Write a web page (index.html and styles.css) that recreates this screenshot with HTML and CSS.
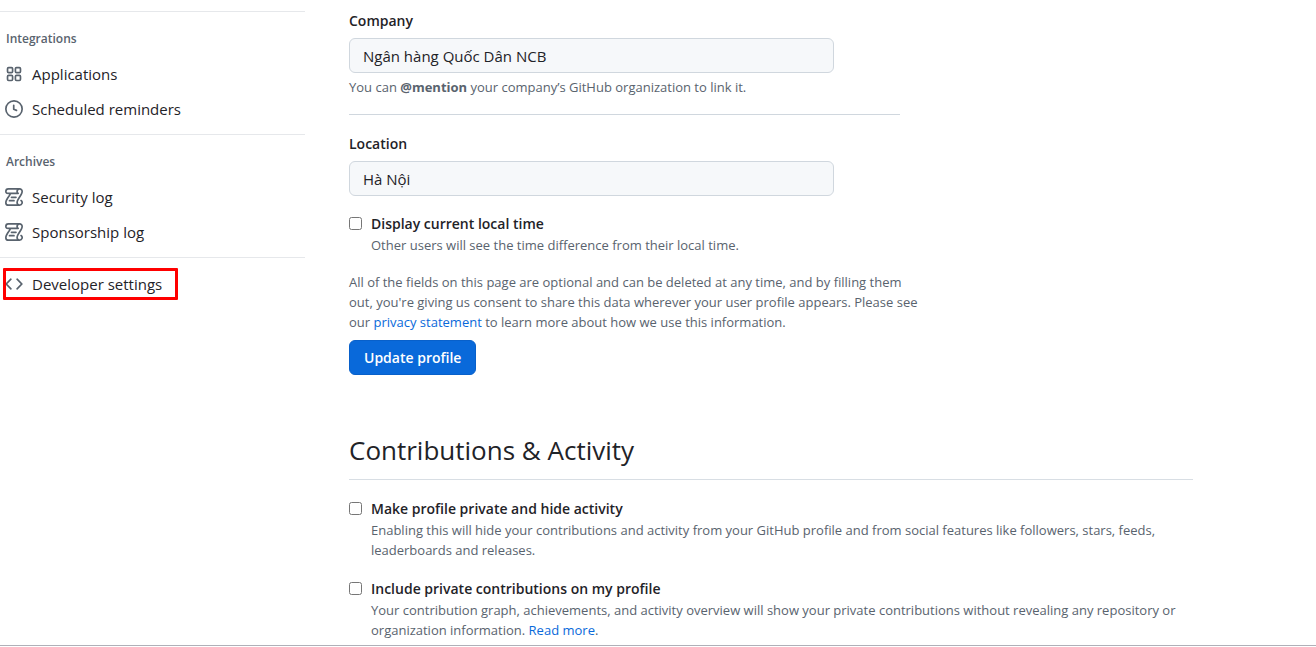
FILE: index.html
```html
<!DOCTYPE html>
<html lang="en">
<head>
<meta charset="utf-8">
<meta name="viewport" content="width=device-width, initial-scale=1">
<title>Your profile</title>
<link rel="stylesheet" href="styles.css">
</head>
<body>
<svg class="sprite" aria-hidden="true">
  <symbol id="apps" viewBox="0 0 16 16"><path fill="none" stroke="currentColor" stroke-width="1.5" d="M3.25 2.25h2.5a1 1 0 0 1 1 1v2.5a1 1 0 0 1-1 1h-2.5a1 1 0 0 1-1-1v-2.5a1 1 0 0 1 1-1ZM10.25 2.25h2.5a1 1 0 0 1 1 1v2.5a1 1 0 0 1-1 1h-2.5a1 1 0 0 1-1-1v-2.5a1 1 0 0 1 1-1ZM3.25 9.25h2.5a1 1 0 0 1 1 1v2.5a1 1 0 0 1-1 1h-2.5a1 1 0 0 1-1-1v-2.5a1 1 0 0 1 1-1ZM10.25 9.25h2.5a1 1 0 0 1 1 1v2.5a1 1 0 0 1-1 1h-2.5a1 1 0 0 1-1-1v-2.5a1 1 0 0 1 1-1Z"/></symbol>
  <symbol id="clock" viewBox="0 0 16 16"><path d="M8 0a8 8 0 1 1 0 16A8 8 0 0 1 8 0ZM1.500 8a6.500 6.500 0 1 0 13 0 6.500 6.500 0 0 0-13 0Zm7-3.250v2.992l2.028.812a.75.75 0 0 1-.557 1.392l-2.500-1A.751.751 0 0 1 7 8.250v-3.500a.75.75 0 0 1 1.500 0Z"/></symbol>
  <symbol id="log" viewBox="0 0 16 16"><path d="M5 8.250a.75.75 0 0 1 .75-.75h4a.75.75 0 0 1 0 1.500h-4A.75.75 0 0 1 5 8.250ZM4 10.500A.75.75 0 0 0 4 12h4a.75.75 0 0 0 0-1.500H4Z"/><path d="M13 0c1.654 0 3 1.328 3 3 0 .982-.338 1.933-.783 2.818-.443.879-1.028 1.758-1.582 2.588l-.011.017c-.568.853-1.104 1.659-1.501 2.446-.398.789-.623 1.494-.623 2.136a1.500 1.500 0 1 0 2.333-1.248.75.75 0 0 1 .834-1.246A3 3 0 0 1 13 16H3a3 3 0 0 1-3-3c0-1.582.891-3.135 1.777-4.506.209-.322.418-.637.623-.946.473-.709.923-1.386 1.287-2.048H2.510c-.576 0-1.381-.133-1.907-.783A2.680 2.680 0 0 1 0 3a3 3 0 0 1 3-3Zm0 1.500a1.500 1.500 0 0 0-1.500 1.500c0 .476.223.834.667 1.132A.75.75 0 0 1 11.750 5.500H5.368c-.467 1.003-1.141 2.015-1.773 2.963-.192.289-.381.571-.558.845C2.130 10.711 1.500 11.916 1.500 13A1.500 1.500 0 0 0 3 14.500h7.401A2.989 2.989 0 0 1 10 13c0-.979.338-1.928.784-2.812.441-.874 1.023-1.748 1.575-2.576l.017-.026c.568-.853 1.103-1.658 1.501-2.448.398-.79.623-1.497.623-2.143 0-.838-.669-1.500-1.500-1.500Zm-10 0a1.500 1.500 0 0 0-1.500 1.500c0 .321.1.569.27.778.097.12.325.227.74.227h7.674A2.737 2.737 0 0 1 10 3c0-.546.146-1.059.401-1.500Z"/></symbol>
  <symbol id="code" viewBox="0 0 16 16"><path d="m11.280 3.220 4.250 4.250a.75.75 0 0 1 0 1.060l-4.250 4.250a.749.749 0 0 1-1.275-.326.749.749 0 0 1 .215-.734L13.940 8l-3.720-3.720a.749.749 0 0 1 .326-1.275.749.749 0 0 1 .734.215Zm-6.560 0a.751.751 0 0 1 1.042.018.751.751 0 0 1 .018 1.042L2.060 8l3.720 3.720a.749.749 0 0 1-.326 1.275.749.749 0 0 1-.734-.215L.47 8.530a.75.75 0 0 1 0-1.060Z"/></symbol>
</svg>
<div class="page">
  <nav class="sidebar" aria-label="Settings">
    <section class="nav-group">
      <h2 class="nav-title">Integrations</h2>
      <a class="nav-item" href="#"><svg class="icon"><use href="#apps"/></svg>Applications</a>
      <a class="nav-item" href="#"><svg class="icon"><use href="#clock"/></svg>Scheduled reminders</a>
    </section>
    <section class="nav-group">
      <h2 class="nav-title">Archives</h2>
      <a class="nav-item" href="#"><svg class="icon"><use href="#log"/></svg>Security log</a>
      <a class="nav-item" href="#"><svg class="icon"><use href="#log"/></svg>Sponsorship log</a>
    </section>
    <section class="nav-group nav-group-last">
      <a class="nav-item marked" href="#"><svg class="icon"><use href="#code"/></svg>Developer settings</a>
    </section>
  </nav>
  <main class="main">
    <form class="profile-form">
      <div class="field">
        <label class="label" for="company">Company</label>
        <input class="input" id="company" type="text" value="Ngân hàng Quốc Dân NCB">
        <p class="note">You can <strong>@mention</strong> your company’s GitHub organization to link it.</p>
      </div>
      <hr class="rule">
      <div class="field">
        <label class="label" for="location">Location</label>
        <input class="input" id="location" type="text" value="Hà Nội">
      </div>
      <div class="check">
        <input class="box" id="localtime" type="checkbox">
        <div>
          <label class="label" for="localtime">Display current local time</label>
          <p class="note">Other users will see the time difference from their local time.</p>
        </div>
      </div>
      <p class="note consent">All of the fields on this page are optional and can be deleted at any time, and by filling them out, you're giving us consent to share this data wherever your user profile appears. Please see our <a class="link" href="#">privacy statement</a> to learn more about how we use this information.</p>
      <button class="button" type="button">Update profile</button>
    </form>
    <section class="activity">
      <h2 class="heading">Contributions &amp; Activity</h2>
      <div class="check">
        <input class="box" id="private" type="checkbox">
        <div>
          <label class="label" for="private">Make profile private and hide activity</label>
          <p class="note">Enabling this will hide your contributions and activity from your GitHub profile and from social features like followers, stars, feeds, leaderboards and releases.</p>
        </div>
      </div>
      <div class="check">
        <input class="box" id="include" type="checkbox">
        <div>
          <label class="label" for="include">Include private contributions on my profile</label>
          <p class="note">Your contribution graph, achievements, and activity overview will show your private contributions without revealing any repository or organization information. <a class="link" href="#">Read more</a>.</p>
        </div>
      </div>
    </section>
  </main>
</div>
</body>
</html>
```
FILE: styles.css
```css
* {
  box-sizing: border-box;
}

body {
  margin: 0;
  background: #fff;
  color: #1f2328;
  font: 15px/22px "Open Sans", "Noto Sans", sans-serif;
}

.sprite {
  display: none;
}

h2,
p {
  margin: 0;
}

.page {
  display: grid;
  grid-template-columns: 305px minmax(0, 1fr);
  column-gap: 44px;
  padding: 10px 123px 5px 0;
  border-bottom: 1px solid #b0b0b8;
  box-shadow: 0 1px #dcdce0;
}

/* Sidebar */
.sidebar {
  padding-top: 1px;
}

.nav-group {
  padding: 17px 0 8px 5px;
  border-top: 1px solid #e6e8eb;
}

.nav-group-last {
  padding: 10px 0 0 3px;
}

.nav-title {
  margin-bottom: 7px;
  padding-left: 1px;
  color: #59636e;
  font-size: 12px;
  font-weight: 600;
  line-height: 20px;
}

.nav-item {
  display: flex;
  align-items: center;
  gap: 9px;
  height: 35px;
  color: #1f2328;
  font-size: 15px;
  text-decoration: none;
}

.icon {
  flex: none;
  width: 18px;
  height: 18px;
  color: #59636e;
  fill: currentColor;
}

.marked {
  position: relative;
  width: 175px;
  height: 32px;
  padding-left: 2px;
}

.marked::after {
  position: absolute;
  inset: 0;
  border: 3px solid #f00;
  border-radius: 1px;
  content: "";
}

/* Profile form */
.profile-form {
  max-width: 551px;
}

.label {
  display: block;
  font-size: 14px;
  font-weight: 600;
}

.input {
  display: block;
  width: 88%;
  height: 35px;
  margin-top: 6px;
  padding: 0 13px;
  border: 1px solid #d0d7de;
  border-radius: 6px;
  background: #f6f8fa;
  color: #1f2328;
  font: inherit;
}

.note {
  color: #59636e;
  font-size: 13px;
  line-height: 20px;
}

.field .note {
  margin-top: 4px;
}

.rule {
  height: 1px;
  margin: 17px 0 18px;
  border: 0;
  background: #d0d7de;
}

.check {
  display: grid;
  grid-template-columns: 13px minmax(0, 1fr);
  column-gap: 9px;
  margin-top: 17px;
}

.box {
  width: 13px;
  height: 13px;
  margin: 4px 0 0;
}

.consent {
  margin: 17px -24px 0 0;
}

.button {
  height: 35px;
  margin-top: 8px;
  padding: 0 14px;
  border: 1px solid #0860ca;
  border-radius: 6px;
  background: #0969da;
  color: #fff;
  font: 600 14px/20px "Open Sans", "Noto Sans", sans-serif;
}

.link {
  color: #0969da;
  text-decoration: none;
}

/* Contributions */
.activity {
  margin-top: 56px;
}

.heading {
  padding-bottom: 10px;
  border-bottom: 1px solid #d8dee4;
  font-size: 26px;
  font-weight: 400;
  line-height: 38px;
}

.activity .check {
  margin-top: 18px;
}
```
